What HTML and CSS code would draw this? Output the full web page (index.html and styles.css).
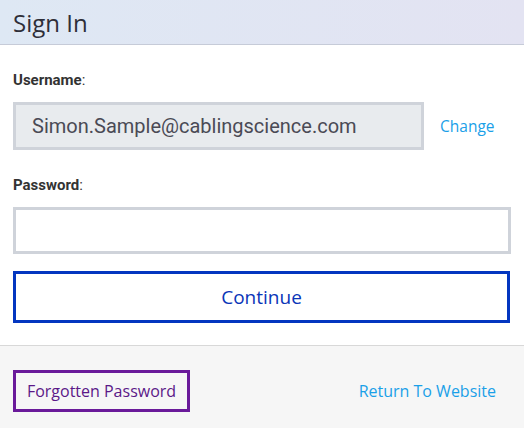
FILE: index.html
```html
<!DOCTYPE html>
<html lang="en">
<head>
    <meta charset="UTF-8">
    <meta name="viewport" content="width=device-width, initial-scale=1.0">
    <title>Sign In</title>
    <link rel="stylesheet" href="styles.css">
</head>
<body>
    <div class="header">
        <h1>Sign In</h1>
    </div>

    <div class="content">
        <label class="label">Username<span class="colon">:</span></label>
        <div class="user-row">
            <div class="field field-readonly">Simon.Sample@cablingscience.com</div>
            <a href="#" class="link">Change</a>
        </div>

        <label for="password" class="label">Password<span class="colon">:</span></label>
        <input type="password" id="password" class="field field-input">

        <button class="continue">Continue</button>
    </div>

    <div class="footer">
        <a href="#" class="forgot">Forgotten Password</a>
        <a href="#" class="link link-return">Return To Website</a>
    </div>
</body>
</html>
```

FILE: styles.css
```css
body {
    margin: 0;
    font-family: Roboto, Arial, sans-serif;
    background-color: #fff;
    color: #333;
}
.header {
    height: 44px;
    padding: 0 13px;
    border-bottom: 1px solid #c6cbd8;
    background: linear-gradient(to right, #dee8f4, #e3e3f2);
    display: flex;
    align-items: center;
}
.header h1 {
    margin: 0;
    font-family: "Open Sans", sans-serif;
    font-weight: 400;
    font-size: 24px;
    color: #2e2e38;
}
.content {
    padding: 27px 13px 22px;
    display: flex;
    flex-direction: column;
}
.label {
    font-size: 15px;
    font-weight: 700;
    color: #333;
    line-height: 17px;
    margin-bottom: 13px;
}
.colon {
    font-weight: 400;
}
.user-row {
    display: flex;
    align-items: center;
    gap: 16px;
    margin-bottom: 27px;
}
.field {
    box-sizing: border-box;
    border: 3px solid #cfd3da;
    height: 48px;
}
.field-readonly {
    width: 411px;
    background-color: #e8ebee;
    padding-left: 16px;
    display: flex;
    align-items: center;
    font-size: 20px;
    color: #4a4a55;
}
.field-input {
    width: 498px;
    height: 47px;
    background-color: #fff;
    margin: 0;
    outline: none;
}
.link {
    font-family: "Open Sans", sans-serif;
    font-size: 15.5px;
    color: #1aa0e8;
    text-decoration: none;
}
.link-return {
    font-size: 16px;
}
.continue {
    margin-top: 17px;
    width: 497px;
    height: 52px;
    border: 3px solid #0436c0;
    background-color: #fff;
    color: #0a35b8;
    font-family: "Open Sans", sans-serif;
    font-size: 19px;
    cursor: pointer;
}
.footer {
    border-top: 1px solid #d8d8d8;
    background-color: #f6f6f6;
    padding: 24px 28px 20px 13px;
    display: flex;
    justify-content: space-between;
    align-items: center;
}
.forgot {
    box-sizing: border-box;
    height: 42px;
    width: 177px;
    border: 3px solid #6a1a9a;
    display: flex;
    align-items: center;
    justify-content: center;
    font-family: "Open Sans", sans-serif;
    font-size: 16px;
    color: #5b1888;
    text-decoration: none;
}
```
